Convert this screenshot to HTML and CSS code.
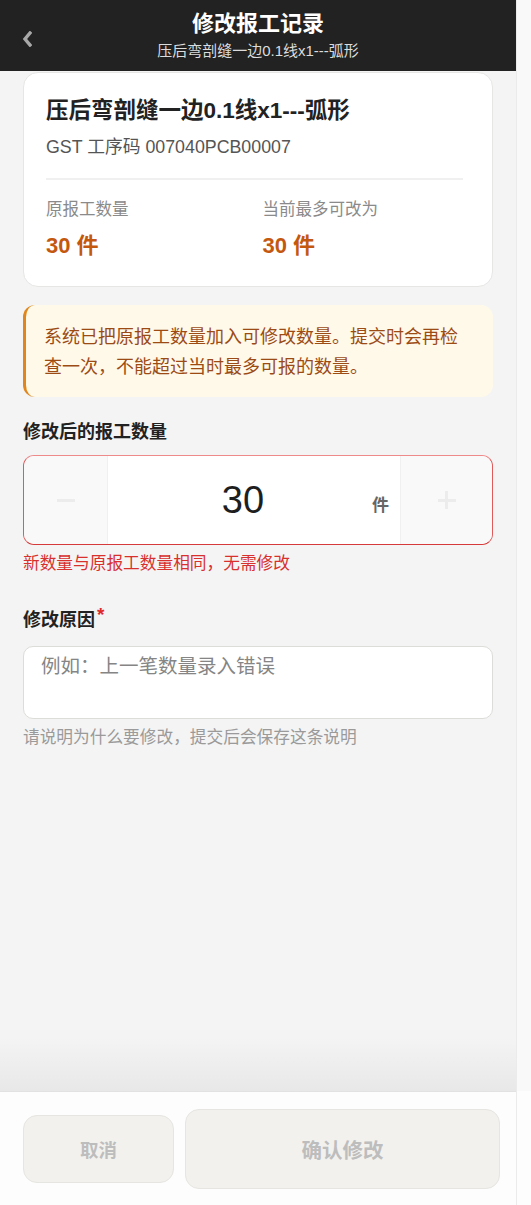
FILE: index.html
```html
<!DOCTYPE html>
<html lang="zh-CN">
<head>
<meta charset="utf-8">
<title>修改报工记录</title>
<link rel="stylesheet" href="styles.css">
</head>
<body>
<div class="screen">
  <div class="app">
    <header class="topbar">
      <button class="back" aria-label="返回">
        <svg width="10" height="16" viewBox="0 0 10 16"><path d="M8 2 L3 8 L8 14" fill="none" stroke="#a8a8a8" stroke-width="3.4" stroke-linecap="square" stroke-linejoin="miter"/></svg>
      </button>
      <div class="top-title">修改报工记录</div>
      <div class="top-sub">压后弯剖缝一边0.1线x1---弧形</div>
    </header>

    <main class="content">
      <section class="card">
        <h1 class="card-title">压后弯剖缝一边0.1线x1---弧形</h1>
        <div class="card-code">GST 工序码 007040PCB00007</div>
        <div class="divider"></div>
        <div class="stats">
          <div class="stat">
            <div class="stat-label">原报工数量</div>
            <div class="stat-value">30 件</div>
          </div>
          <div class="stat">
            <div class="stat-label">当前最多可改为</div>
            <div class="stat-value">30 件</div>
          </div>
        </div>
      </section>

      <div class="notice">系统已把原报工数量加入可修改数量。提交时会再检查一次，不能超过当时最多可报的数量。</div>

      <div class="field-label">修改后的报工数量</div>
      <div class="stepper">
        <div class="step-btn"><span class="minus"></span></div>
        <div class="step-mid">
          <span class="step-num">30</span>
          <span class="step-unit">件</span>
        </div>
        <div class="step-btn"><span class="plus"></span></div>
      </div>
      <div class="error">新数量与原报工数量相同，无需修改</div>

      <div class="field-label reason">修改原因<span class="req">*</span></div>
      <div class="textarea"><span class="placeholder">例如：上一笔数量录入错误</span></div>
      <div class="helper">请说明为什么要修改，提交后会保存这条说明</div>
    </main>

    <footer class="bottombar">
      <button class="btn btn-cancel">取消</button>
      <button class="btn btn-confirm">确认修改</button>
    </footer>
  </div>
  <div class="track"></div>
</div>
</body>
</html>
```

FILE: styles.css
```css
* { box-sizing: border-box; }
html, body { margin: 0; padding: 0; }
body {
  background: #f4f4f4;
  font-family: "Liberation Sans", "Noto Sans CJK SC", sans-serif;
  color: #222;
}
.screen {
  display: grid;
  grid-template-columns: 516px 15px;
  height: 1205px;
  overflow: hidden;
}
.app {
  display: flex;
  flex-direction: column;
  height: 1205px;
  background: #f4f4f4;
}
.track {
  border-left: 1px solid #ebebeb;
  background: linear-gradient(#f9f9f9 0, #f9f9f9 1091px, #fdfdfd 1091px);
}

/* header */
.topbar {
  position: relative;
  height: 71px;
  background: #222222;
  display: flex;
  flex-direction: column;
  align-items: center;
  padding-top: 10px;
  flex: none;
}
.back {
  position: absolute;
  left: 22px;
  top: 31px;
  width: 14px;
  height: 18px;
  padding: 0;
  border: 0;
  background: none;
  display: flex;
}
.top-title {
  font-size: 22px;
  line-height: 28px;
  font-weight: 700;
  color: #fff;
}
.top-sub {
  margin-top: 3px;
  font-size: 15px;
  line-height: 20px;
  color: #dcdcdc;
}

/* content */
.content {
  flex: 1;
  padding: 1px 23px 0;
}
.card {
  background: #fff;
  border: 1px solid #e6e6e4;
  border-radius: 15px;
  padding: 24px 29px 26px 22px;
}
.card-title {
  margin: 0;
  font-size: 22.5px;
  line-height: 28px;
  font-weight: 700;
  color: #222;
}
.card-code {
  margin-top: 11px;
  font-size: 17.8px;
  line-height: 22px;
  color: #555;
}
.divider {
  margin-top: 20px;
  height: 2px;
  background: #f0f0f0;
}
.stats {
  margin-top: 19px;
  display: grid;
  grid-template-columns: 1fr 1fr;
  column-gap: 16px;
}
.stat-label {
  font-size: 16.5px;
  line-height: 20px;
  color: #8a8a8a;
}
.stat-value {
  margin-top: 13px;
  font-size: 22px;
  line-height: 28px;
  font-weight: 700;
  color: #c4580f;
}

.notice {
  margin-top: 18px;
  background: #fef9e9;
  border-left: 3px solid #e0861c;
  border-radius: 12px;
  padding: 17px 22px 15px 18px;
  font-size: 18px;
  line-height: 30px;
  color: #9c4b15;
}

.field-label {
  margin-top: 23px;
  font-size: 18px;
  line-height: 24px;
  font-weight: 700;
  color: #222;
}
.field-label.reason { margin-top: 29px; }
.req {
  color: #e02a2a;
  font-size: 19px;
  font-weight: 700;
  margin-left: 2px;
  vertical-align: 5px;
}

.stepper {
  margin-top: 11px;
  height: 90px;
  display: flex;
  border: 1px solid #e05a5a;
  border-top-color: #ef8a8a;
  border-bottom-color: #d63a3a;
  border-radius: 11px;
  overflow: hidden;
  background: #fff;
}
.step-btn {
  background: #f9f9f9;
  display: flex;
  align-items: center;
  justify-content: center;
}
.step-btn:first-child { width: 84px; border-right: 1px solid #f0f0f0; }
.step-btn:last-child { width: 92px; border-left: 1px solid #f0f0f0; }
.minus {
  width: 18px;
  height: 3px;
  background: #ececec;
}
.plus {
  width: 18px;
  height: 18px;
  background:
    linear-gradient(#ececec, #ececec) center / 18px 3px no-repeat,
    linear-gradient(#ececec, #ececec) center / 3px 18px no-repeat;
}
.step-mid {
  flex: 1;
  display: flex;
  align-items: center;
  background: #fff;
}
.step-num {
  flex: 1;
  padding-left: 6px;
  text-align: center;
  font-size: 38px;
  color: #1e1e1e;
}
.step-unit {
  margin-right: 11px;
  font-size: 17px;
  font-weight: 700;
  color: #666;
  padding-top: 6px;
}

.error {
  margin-top: 9px;
  font-size: 16.7px;
  line-height: 20px;
  color: #d8302d;
}

.textarea {
  margin-top: 14px;
  height: 73px;
  background: #fff;
  border: 1px solid #dcdcd8;
  border-radius: 10px;
  padding: 6px 17px;
}
.placeholder {
  font-size: 19.5px;
  line-height: 26px;
  color: #858585;
}
.helper {
  margin-top: 9px;
  font-size: 16.7px;
  line-height: 20px;
  color: #9a9a9a;
}

/* bottom bar */
.bottombar {
  position: relative;
  flex: none;
  height: 114px;
  background: #fdfdfd;
  display: flex;
  align-items: center;
  gap: 11px;
  padding: 0 16px 0 23px;
  border-top: 1px solid #eeeeee;
}
.bottombar::before {
  content: "";
  position: absolute;
  left: 0;
  right: 0;
  bottom: 100%;
  height: 55px;
  background: linear-gradient(rgba(0,0,0,0), rgba(0,0,0,0.05));
  pointer-events: none;
}
.btn {
  font-family: inherit;
  background: #f2f1ee;
  border: 1px solid #e6e5e1;
  border-radius: 14px;
  font-weight: 700;
  color: #bdbdbd;
  padding: 0;
}
.btn-cancel {
  width: 151px;
  height: 68px;
  font-size: 18.5px;
}
.btn-confirm {
  flex: 1;
  height: 80px;
  font-size: 20.5px;
}
```
